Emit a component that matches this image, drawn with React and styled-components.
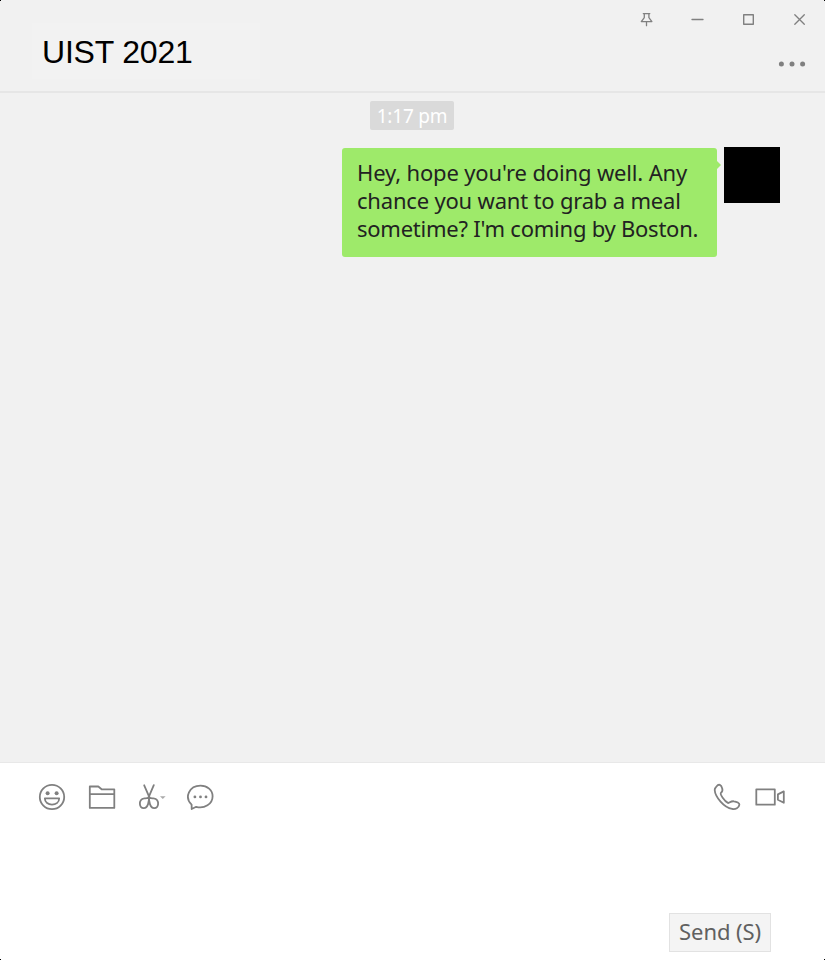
import React from "react";
import styled, { createGlobalStyle } from "styled-components";

const GlobalStyle = createGlobalStyle`
  * { box-sizing: border-box; }
  body { margin: 0; background: #000; }
`;

const Window = styled.main`
  width: 825px;
  height: 960px;
  display: flex;
  flex-direction: column;
  overflow: hidden;
  background: #f1f1f1;
  font-family: "Noto Sans", "Open Sans", sans-serif;
  clip-path: polygon(1px 0, 824px 0, 824px 1px, 825px 1px, 825px 959px, 824px 959px, 824px 960px, 1px 960px, 1px 959px, 0 959px, 0 1px, 1px 1px);
`;

const Header = styled.header`
  height: 93px;
  flex: none;
  display: flex;
  justify-content: space-between;
  border-bottom: 2px solid #e6e6e6;
`;

const TitlePanel = styled.div`
  width: 228px;
  height: 56px;
  margin: 23px 0 0 32px;
  padding: 2px 0 0 10px;
  display: flex;
  align-items: center;
  background: #f2f2f2;
`;

const Title = styled.h1`
  margin: 0;
  color: #000;
  font: 400 32px/36px "Liberation Sans", Arial, sans-serif;
  letter-spacing: -0.2px;
`;

const HeaderActions = styled.div`
  display: flex;
  flex-direction: column;
  align-items: flex-end;
`;

const WindowControls = styled.div`
  display: flex;
  gap: 31px;
  padding: 9px 16px 0 0;
`;

const IconButton = styled.button`
  display: flex;
  padding: 0;
  border: 0;
  background: none;
  color: #808080;
`;

const MoreButton = styled(IconButton)`
  margin: 30px 19px 0 0;
`;

const Conversation = styled.section`
  flex: 1;
  padding-top: 8px;
`;

const Timestamp = styled.time`
  display: block;
  width: 84px;
  height: 29px;
  margin-left: 370px;
  border-radius: 2px;
  background: #dadada;
  color: #fff;
  font-size: 19px;
  line-height: 30px;
  letter-spacing: -0.2px;
  text-align: center;
  white-space: nowrap;
`;

const MessageRow = styled.div`
  display: flex;
  justify-content: flex-end;
  align-items: flex-start;
  gap: 7px;
  margin-top: 17px;
  padding-right: 45px;
`;

const Bubble = styled.div`
  position: relative;
  width: 375px;
  height: 109px;
  margin-top: 1px;
  padding: 10px 0 0 15px;
  border-radius: 3px;
  background: #9eea6a;
  color: #222;
  font-size: 22px;
  line-height: 28px;

  &::after {
    content: "";
    position: absolute;
    top: 13px;
    right: -4px;
    border: 4px solid transparent;
    border-right: 0;
    border-left-color: #9eea6a;
  }
`;

const Line = styled.span`
  display: block;
  white-space: nowrap;
  letter-spacing: ${(p) => p.$tracking}px;
`;

const Avatar = styled.div`
  width: 56px;
  height: 56px;
  background: #000;
`;

const Composer = styled.footer`
  height: 198px;
  flex: none;
  display: flex;
  flex-direction: column;
  justify-content: space-between;
  border-top: 1px solid #e8e8e8;
  background: #fff;
`;

const Toolbar = styled.div`
  display: flex;
  justify-content: space-between;
  padding: 19px 39px 0 37px;
`;

const ToolGroup = styled.div`
  display: flex;
  gap: ${(p) => p.$gap}px;
`;

const SendButton = styled.button`
  align-self: flex-end;
  width: 102px;
  height: 39px;
  margin: 0 54px 8px 0;
  padding: 0 0 3px;
  border: 1px solid #e2e2e2;
  background: #f4f4f4;
  color: #606060;
  font: 400 22px/34px "Noto Sans", "Open Sans", sans-serif;
  letter-spacing: -0.1px;
  white-space: nowrap;
`;

function Icon({ width = 30, height = 30, stroke = 1.8, children }) {
  return (
    <svg
      width={width}
      height={height}
      viewBox={`0 0 ${width} ${height}`}
      fill="none"
      stroke="currentColor"
      strokeWidth={stroke}
      strokeLinejoin="round"
      strokeLinecap="round"
      aria-hidden="true"
    >
      {children}
    </svg>
  );
}

const PinIcon = () => (
  <Icon width={20} height={20} stroke={1.3}>
    <path d="M7.3 4.6h6.5M8.3 4.6v4L5.3 12.6h10.6L12.9 8.6v-4M10.5 12.7v4" />
  </Icon>
);
const MinimizeIcon = () => (
  <Icon width={20} height={20} stroke={1.3}><path d="M5 10.5h11" /></Icon>
);
const MaximizeIcon = () => (
  <Icon width={20} height={20} stroke={1.4}><rect x="5.7" y="5.7" width="9.6" height="9.6" /></Icon>
);
const CloseIcon = () => (
  <Icon width={20} height={20} stroke={1.3}><path d="m5.8 5.8 9.5 9.5m0-9.5-9.5 9.5" /></Icon>
);
const MoreIcon = () => (
  <Icon width={30} height={10}>
    <g fill="currentColor" stroke="none">
      <circle cx="5.4" cy="5" r="2.5" />
      <circle cx="16" cy="5" r="2.5" />
      <circle cx="26.6" cy="5" r="2.5" />
    </g>
  </Icon>
);
const SmileIcon = () => (
  <Icon>
    <circle cx="15" cy="15" r="12.2" />
    <g fill="currentColor" stroke="none">
      <circle cx="10.6" cy="11.2" r="2" />
      <circle cx="19.6" cy="11.2" r="2" />
    </g>
    <path d="M7.8 16.3h14.4c0 8.4-14.4 8.4-14.4 0Z" />
  </Icon>
);
const FolderIcon = () => (
  <Icon>
    <path d="M2.8 25.9V4.5h8.5l3.3 2.8h12.7v18.6ZM2.8 12.1h24.5" />
  </Icon>
);
const ScissorsIcon = () => (
  <Icon>
    <path d="M8.2 3.3 13 14.4M17.8 3.1 13 14.4" />
    <path d="M13 14.4c-.7 2.2-2.7 1.8-4.8 2-3 .2-4.6 2.9-4.3 5.7.3 2.7 2 4.1 4 4 4.1-.1 5.3-6.7 5.1-11.7Z" />
    <path d="M13 14.4c.7 2.2 2.7 1.8 4.8 2 3 .2 4.6 2.9 4.3 5.7-.3 2.7-2 4.1-4 4-4.1-.1-5.3-6.7-5.1-11.7Z" />
    <path d="M24 14.2h5.6l-2.8 2.7Z" fill="#aaa" stroke="none" />
  </Icon>
);
const ChatIcon = () => (
  <Icon>
    <path d="M5.6 22.6C-2 15.5 3.2 3.6 14.5 3.6c6.8 0 12.1 4.6 12.1 10.6 0 7.9-8.2 12.7-16.4 10.6L5.7 27Z" />
    <g fill="currentColor" stroke="none">
      <circle cx="8.9" cy="14.9" r="1.4" />
      <circle cx="14.5" cy="14.9" r="1.4" />
      <circle cx="20" cy="14.9" r="1.4" />
    </g>
  </Icon>
);
const PhoneIcon = () => (
  <Icon>
    <path d="M4.5 4.5c2.2-3 4.8-1.9 5.8 2.2.5 2-.1 3.1-1.3 4-1.6 1.2 3.8 8.6 6.9 10.2 1.7.7 2.4-2.1 6-1.6 2.9.3 5.7 1.7 5.5 3.4-.4 3.1-3.8 4.9-7.3 4.2-8-1.2-17-12-17.4-18.9-.1-1.5.8-2.2 1.8-3.5Z" />
  </Icon>
);
const VideoIcon = () => (
  <Icon width={32}>
    <rect x="2.3" y="7.3" width="18.5" height="15.4" />
    <path d="M23.9 12.4 29.8 9.4v11.4l-5.9-3Z" />
  </Icon>
);

export default function App() {
  return (
    <>
      <GlobalStyle />
      <Window>
        <Header>
          <TitlePanel><Title>UIST 2021</Title></TitlePanel>
          <HeaderActions>
            <WindowControls>
              <IconButton aria-label="Pin"><PinIcon /></IconButton>
              <IconButton aria-label="Minimize"><MinimizeIcon /></IconButton>
              <IconButton aria-label="Maximize"><MaximizeIcon /></IconButton>
              <IconButton aria-label="Close"><CloseIcon /></IconButton>
            </WindowControls>
            <MoreButton aria-label="More"><MoreIcon /></MoreButton>
          </HeaderActions>
        </Header>
        <Conversation>
          <Timestamp>1:17 pm</Timestamp>
          <MessageRow>
            <Bubble>
              <Line $tracking={-0.15}>Hey, hope you're doing well. Any</Line>
              <Line $tracking={-0.19}>chance you want to grab a meal</Line>
              <Line $tracking={-0.24}>sometime? I'm coming by Boston.</Line>
            </Bubble>
            <Avatar />
          </MessageRow>
        </Conversation>
        <Composer>
          <Toolbar>
            <ToolGroup $gap={19.5}>
              <IconButton aria-label="Emoji"><SmileIcon /></IconButton>
              <IconButton aria-label="Files"><FolderIcon /></IconButton>
              <IconButton aria-label="Screenshot"><ScissorsIcon /></IconButton>
              <IconButton aria-label="Chat history"><ChatIcon /></IconButton>
            </ToolGroup>
            <ToolGroup $gap={12}>
              <IconButton aria-label="Voice call"><PhoneIcon /></IconButton>
              <IconButton aria-label="Video call"><VideoIcon /></IconButton>
            </ToolGroup>
          </Toolbar>
          <SendButton>Send (S)</SendButton>
        </Composer>
      </Window>
    </>
  );
}
